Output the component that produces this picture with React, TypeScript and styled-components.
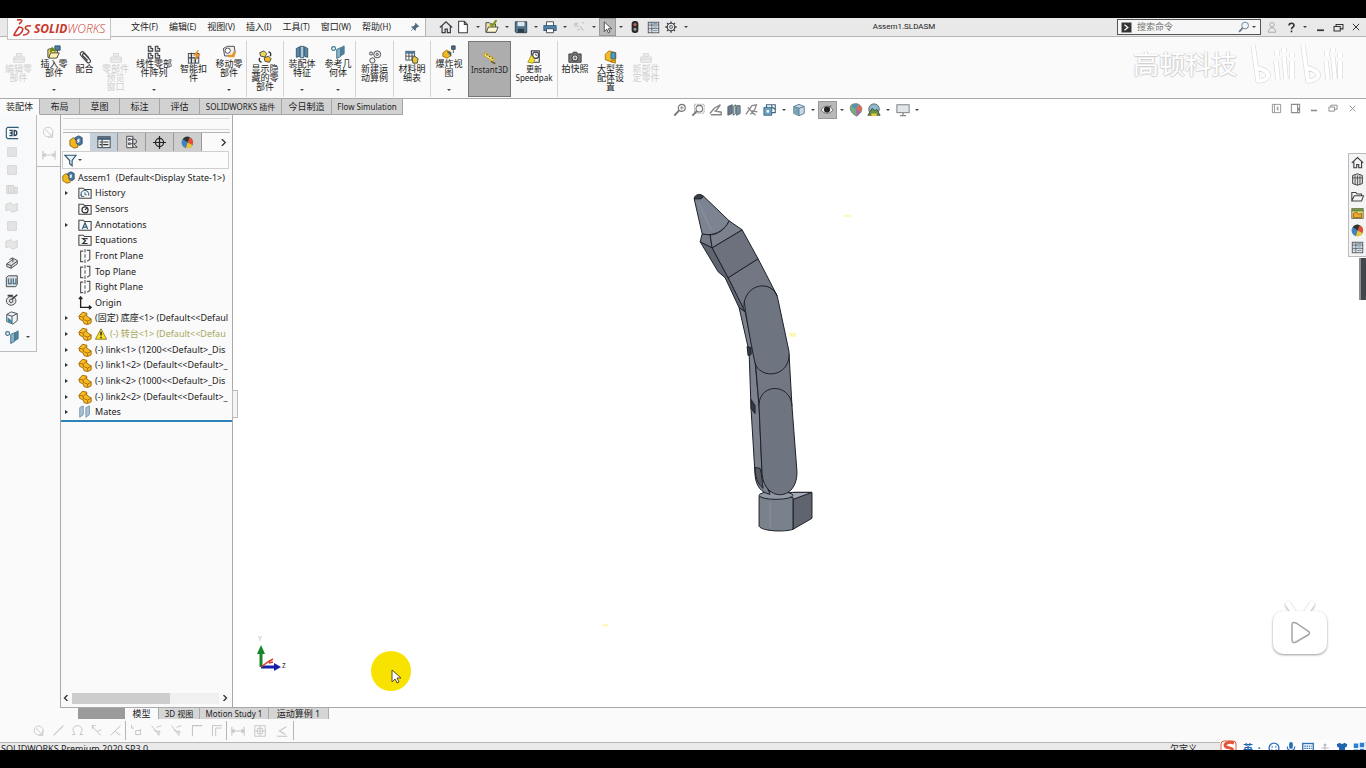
import React from "react";
import styled, { createGlobalStyle, css } from "styled-components";

const Global = createGlobalStyle`
  * { box-sizing: border-box; }
  body {
    margin: 0;
    background: #000;
    color: #222;
    font-family: "Noto Sans", "Noto Sans CJK SC", sans-serif;
    font-size: 9px;
    line-height: 12px;
  }
  button, input { font: inherit; color: inherit; }
  button { border: 0; padding: 0; margin: 0; background: none; }
  ul { list-style: none; margin: 0; padding: 0; }
`;

/* ---------- drawings ---------- */

const K = "#3c3f45";
const B = "#4a7fa5";
const Y = "#f0b91c";

const shapes: Record<string, React.ReactNode> = {
  home: <><path d="M1 8.500 8 2l7 6.500M3.500 7v7.500h3.500v-4h2.500v4H13V7" fill="none" stroke={K} strokeWidth="1.400" /></>,
  file: <path d="M3 1.500h6.500l3.500 3.500v9.500H3zM9.500 1.500V5H13" fill="#fff" stroke={K} strokeWidth="1.200" />,
  open: <><path d="M1 14V3h4l1.500 1.500H12V14z" fill="#efe0a0" stroke={K} /><path d="M1.500 14 4 8h11l-2.500 6z" fill="#fff7cf" stroke={K} /><path d="M13 0 8.500 7 6 4.500" fill="none" stroke="#7d9a1c" strokeWidth="2.500" /></>,
  save: <><path d="M1.500 2h13v12.500h-12l-1-1z" fill="#53788f" stroke="#2b3d4b" /><path d="M4 2h8v5H4z" fill="#dce7ee" /><path d="M4.500 10h7v4.500h-7z" fill="#2b3d4b" /></>,
  print: <><path d="M4 7V2h8v5" fill="#fff" stroke={K} /><rect x="1" y="6.500" width="14" height="5.500" fill="#4b86b4" stroke="#24506f" /><path d="M4 10h8v4.500H4z" fill="#fff" stroke={K} /></>,
  undo: <path d="M3 4l4 4M3 4v4M3 4h4M9 7l4 5M6 11h3M11 3h3" fill="none" stroke="#c8c8c8" strokeWidth="1.500" />,
  cursor: <path d="M4 1v12l3-3 2 4.500 2-1L9 9.500h4z" fill="#fff" stroke="#333" />,
  traffic: <><rect x="3.500" y="0" width="9" height="16" rx="4" fill="#2a2a2a" /><circle cx="8" cy="4.500" r="2" fill="#c9665c" /><circle cx="8" cy="11" r="2" fill="#9c9c9c" /></>,
  list: <><rect x="1.500" y="1.500" width="13" height="13" fill="#fff" stroke={K} /><path d="M1.500 5h13M1.500 9.500h13M6 1.500v13" stroke={K} /><path d="M3 3.300h1.500M3 7.300h1.500M3 12h1.500M7.500 3.300H13M7.500 7.300H13M7.500 12H13" stroke={B} strokeWidth="1.300" /></>,
  gear: <><circle cx="8" cy="8" r="5" fill="none" stroke={K} strokeWidth="1.500" /><circle cx="8" cy="8" r="2" fill="none" stroke={K} /><path d="M8 .5v2.500M8 13v2.500M.5 8H3M13 8h2.500M2.700 2.700l1.800 1.800M11.500 11.500l1.800 1.800M2.700 13.300l1.800-1.800M11.500 4.500l1.800-1.800" stroke={K} strokeWidth="1.800" /></>,
  pin: <path d="M9 2l5 5-2 .5-3 3-.5 3L2.500 8l3-.5 3-3zM5.500 10.500 2 14" fill="#4f6f86" stroke="#42576a" />,
  user: <><circle cx="8" cy="5" r="3" fill="none" stroke="#999" /><path d="M3 15c0-8 10-8 10 0z" fill="none" stroke="#999" /></>,
  help: <path d="M4.500 5c0-4.500 7-4 7 0 0 2.500-3.500 2.500-3.500 5.500M8 12.500v2.500" fill="none" stroke="#333" strokeWidth="2.400" />,
  min: <path d="M3 12h10" stroke="currentColor" strokeWidth="2.500" />,
  restore: <path d="M1.500 6.500h9V13h-9zM4.500 6.500v-3h10v6.500h-4" fill="none" stroke="currentColor" strokeWidth="1.500" />,
  close: <path d="M3 3l10 10M13 3 3 13" stroke="currentColor" strokeWidth="1.600" />,
  paneL: <path d="M2 2h12v12H2zM5 2v12M10 5v6M9 6v4" fill="none" stroke="currentColor" strokeWidth="1.300" />,
  paneR: <path d="M2 2h12v12H2zM11 2v12M12.500 7v4" fill="none" stroke="currentColor" strokeWidth="1.500" />,
  search: <><circle cx="9.500" cy="6" r="4.500" fill="#eef5fb" stroke="#69798c" strokeWidth="1.200" /><path d="M6 9.500 1.500 14.500" stroke="#69798c" strokeWidth="2.200" /></>,
  prompt: <><rect x="1" y="1" width="14" height="14" fill="#333" stroke="#888" /><path d="M5 4l5 4-5 4" fill="none" stroke="#fff" strokeWidth="1.800" /></>,
  insert: <><path d="M1 14V5l4-1 1 2h6v8z" fill="#f3dc6b" stroke={K} /><path d="M2 15l2-6h10l-3 6z" fill="#fff1ae" stroke={K} /><path d="M9 1h6v5H9z" fill={B} stroke="#2d4c63" /><path d="M4 8l2-4 4 3" fill="none" stroke="#6c8b1e" strokeWidth="2.500" /></>,
  clip: <path d="M12.500 9 7 3C4.500.5 1 3.500 3.500 6.500l7 7.500c2.500 2 5-.5 3-3L7.500 4.500C6 3.500 4.500 5 5.500 6.500L11 12" fill="none" stroke={K} strokeWidth="1.300" />,
  pattern: <g fill="#ddd" stroke={K} strokeWidth="1.200"><path d="M1.500 1.500h3V4h2v3h-5zM9.500 1.500h3V4h2v3h-5zM1.500 9.500h3V12h2v3h-5zM9.500 9.500h3V12h2v3h-5z" /></g>,
  smart: <><rect x="1.500" y="4" width="12" height="11" fill="#dceaf4" stroke={K} /><path d="M5 3v12M9.500 9v6M1.500 9h12" stroke={K} strokeWidth="1.500" /><path d="M13 0 7.500 6H11l-3 6 7-7h-4z" fill="#f29a2e" stroke="#d67b12" strokeWidth=".7" /></>,
  move: <><path d="M1.500 4 6 1.500h8l1 7-4 4H3z" fill="#eee" stroke={K} /><circle cx="6.500" cy="6.500" r="3" fill="#fff" stroke={K} /><path d="M7 12.500h6l1.500-5" stroke="#e79624" strokeWidth="3" fill="none" /></>,
  show: <><path d="M2 3l5-2 3 3-2 4-5-1z" fill="#f0d55c" stroke={K} /><path d="M7 9l5-2 3 3-2 4-5-1z" fill={Y} stroke={K} /><path d="M12 2c3 1 3 3 2 5M4 14C1 13 1 11 2 9" fill="none" stroke="#333" strokeWidth="1.600" /></>,
  feature: <><path d="M1.500 4l4-2v11l-4 1zM11 2l3.500 2v10l-3.500-1z" fill="#5b88a6" stroke="#31546c" /><path d="M6 1.500h4v13H6z" fill="#a9c5d8" stroke="#31546c" /></>,
  refgeo: <><circle cx="3" cy="4" r="2.200" fill="none" stroke="#3d718f" strokeWidth="1.300" /><path d="M6.500 5l4.500-2v10l-4.500 2.500z" fill="#8bb0c6" stroke="#3d718f" /><path d="M11.500 3 15 1v9l-3.500 2z" fill="#55829e" stroke="#3d718f" /></>,
  motion: <><circle cx="10.500" cy="5" r="4" fill="#eee" stroke={K} /><circle cx="10.500" cy="5" r="1.300" fill="none" stroke={K} /><circle cx="5" cy="12" r="3" fill="#eee" stroke={K} /><circle cx="3.500" cy="4" r="1.800" fill="#ddd" stroke={K} /></>,
  bom: <><rect x="1" y="1.500" width="10" height="10" fill="#fff" stroke={K} /><path d="M1 3h10" stroke={B} strokeWidth="2.500" /><path d="M1 7h10M4.500 3v8M8 3v8" stroke={K} /><path d="M8 9l3-2 4 3-1 5H9z" fill="#e8c534" stroke={K} /></>,
  explode: <><path d="M1 9l4-3 5 2v4l-4 3-5-2z" fill={Y} stroke="#a86b10" /><path d="M6 8l4 1v4" fill={B} stroke="#2c4464" /><path d="M11 1h4v4h-4z" fill="#4d6e96" stroke={K} /><path d="M13 6v3" stroke={K} /></>,
  instant: <><path d="M2 2l11 7-2 3L1 5z" fill="#f7eaa0" stroke="#cfa91b" strokeWidth="1.200" /><path d="M4 4l1 1M7 6l1 1M10 8l1 1M9 12l5 2.500" stroke="#59511f" strokeWidth="1.500" /></>,
  speedpak: <><path d="M5 1h9v13H5z" fill="#f5f5f5" stroke={K} strokeWidth="1.300" /><circle cx="10" cy="6" r="3.500" fill="#fff" stroke={K} strokeWidth="1.400" /><path d="M10 4v2h2" fill="none" stroke={K} /><path d="M1 14 5 6l4 5-2 4z" fill="#f1df36" stroke="#a69722" /></>,
  camera: <><path d="M1 4.500h4l1-2h4l1 2h4V14H1z" fill="#77797d" stroke="#333" /><circle cx="8" cy="9" r="3.500" fill="#ddd" stroke="#222" /><circle cx="8" cy="9" r="1.500" fill="#777" /></>,
  large: <><path d="M1.500 5l4-4 8 2v7l-4 4-8-3z" fill="#f5bd25" stroke="#a86b10" /><path d="M8 3h5v7H8z" fill="#4e9cc4" stroke="#286787" /><path d="M7 13l6 2v-4z" fill={Y} stroke="#a86b10" /></>,
  ghost: <g stroke="#d6d6d6" fill="#eee"><path d="M2 8h12v6H2zM5 4h6v3H5z" /><path d="M1 10.500h14" /></g>,
  asm: <><path d="M1 6l4-3 3 2v4l2 2v3l-4 1-5-3z" fill={Y} stroke="#8b640e" /><path d="M7 3l4-2 4 2v7l-3 2-3-2V6L7 5z" fill="#4b79a5" stroke="#2c4464" /><path d="M9.500 5 12 4v4l-2.500 1z" fill="#e9f2fa" /></>,
  part: <><path d="M1 6l4-4.500 5 1v3.500l5 3v4.500l-4 2-4-1-1-3-4-2z" fill="#f9bb22" stroke="#a2690c" strokeWidth="1.100" /><path d="M1.500 6 6 7l4-3.500M6 7v3.500M7 10l4 1.500 4-2M11 11.500v3.500" fill="none" stroke="#a2690c" /></>,
  props: <><rect x="1" y="2" width="14" height="12.500" fill="#eef3f7" stroke="#333" /><path d="M1 4h14" stroke="#40607a" strokeWidth="3" /><path d="M3 8h2M3 11h2M7 8h6M7 11h6M5.800 5v9" stroke="#333" strokeWidth="1.200" /></>,
  config: <><path d="M2 1.500h7v13H2z" fill="#f3f3f3" stroke={K} /><path d="M4 4h2v2H4zM4 9h2v2H4zM6 5h3v5H6" fill="none" stroke={K} /><path d="M9 4l4 2v3l-3 1 4 4H9z" fill="#ddd" stroke={K} /></>,
  target: <><circle cx="8" cy="8" r="5" fill="none" stroke="#222" strokeWidth="1.500" /><path d="M8 0v16M0 8h16" stroke="#222" strokeWidth="1.500" /></>,
  ball: <><circle cx="8" cy="8" r="7" fill="#3d9b62" /><path d="M8 8 2 4a7 7 0 0 1 9-2.500z" fill="#333" /><path d="M8 8l3-6.500A7 7 0 0 1 14 11z" fill="#e84c35" /><path d="M8 8l6 3a7 7 0 0 1-8 3.700z" fill="#f2c530" /><path d="M8 8 6 14.700A7 7 0 0 1 2 4z" fill="#3f83c4" /></>,
  swatch: <><path d="M2 3c3-3 8-3 11 0 3 4 2 7-4 12C4 13 0 8 2 3z" fill="#6db07e" stroke="#777" /><path d="M8 7 3 3c2-2 5-2 7-1z" fill="#4f90c0" /><path d="M8 7l3-5c4 2 4 5 2 8z" fill="#e26a54" /><path d="M8 7l5 3-4 5z" fill="#b65bb0" /></>,
  filter: <path d="M1 1.500h14L10 8v6.500L7 12V8z" fill="#eaf2f8" stroke="#2f5673" strokeWidth="1.400" />,
  history: <><path d="M1 14V2.500h5L7.500 4H15v10z" fill="#f8f8f8" stroke="#444" strokeWidth="1.200" /><path d="M4 12a4.500 4.500 0 1 1 8-1M4 12V9M4 12h3M8 7v3h2" fill="none" stroke="#4e7389" strokeWidth="1.200" /></>,
  sensors: <><path d="M1 14V2.500h5L7.500 4H15v10z" fill="#f8f8f8" stroke="#444" strokeWidth="1.200" /><circle cx="8" cy="9" r="3.500" fill="none" stroke="#333" strokeWidth="1.400" /><path d="M8 9l2-2" stroke="#333" strokeWidth="1.500" /></>,
  annot: <><path d="M1 14V2.500h5L7.500 4H15v10z" fill="#f8f8f8" stroke="#444" strokeWidth="1.200" /><path d="M5 12.500 8 5.500l3 7M6 10.500h4" fill="none" stroke="#315c79" strokeWidth="1.400" /></>,
  equa: <><path d="M1 14V2.500h5L7.500 4H15v10z" fill="#f8f8f8" stroke="#444" strokeWidth="1.200" /><path d="M11 6.500H5.500L8.500 9l-3 3H11" fill="none" stroke="#333" strokeWidth="1.400" /></>,
  plane: <><path d="M6 2.500H3v12h3M10 1.500h3.500v10.500L10.500 14" fill="none" stroke="#555" strokeWidth="1.300" /><path d="M8 0v16" stroke="#555" strokeWidth="1.200" strokeDasharray="4 2" /></>,
  origin: <path d="M3 1v12h12M1 3.500 3 1l2 2.500M12.500 11l2.500 2-2.500 2" fill="none" stroke="#222" strokeWidth="1.500" />,
  warn: <><path d="M8 1 15.500 15H.5z" fill="#f7df23" stroke="#75690e" /><path d="M8 5v5M8 11.500v2" stroke="#111" strokeWidth="1.800" /></>,
  mates: <path d="M2 3l4-2v10l-4 3zM9 3l4-2v10l-4 3z" fill="#a9c3d6" stroke="#6f90a8" />,
  threeD: <><path d="M15 2.500V1.500H3L1.500 3v10L3 14.500h12" fill="none" stroke="#315c79" strokeWidth="1.300" /><path d="M5 5h3v6H5M5.500 8H8M10.500 5v6c4 0 4-6 0-6z" fill="none" stroke="#25435a" strokeWidth="1.500" /></>,
  block: <path d="M3 3h10v10H3z" fill="#e3e3e3" stroke="#d2d2d2" />,
  blockB: <><path d="M2 4h8v9H2zM11 6h3v7h-3z" fill="#e6e6e6" stroke="#cfcfcf" /><path d="M4 4v9M7 4v9" stroke="#cfcfcf" /></>,
  blockC: <path d="M1 5l6-2 2 3 5-2v8l-6 2-3-3-4 1z" fill="#e6e6e6" stroke="#d0d0d0" />,
  extr: <><path d="M2 9l8-6 4 2v4l-7 5-5-2z" fill="#dedede" stroke={K} /><path d="M2 9l5 2 7-5M7 11v3M5 4l4-2v5" fill="none" stroke={K} /></>,
  shell: <><path d="M1.500 4 4 2h10v10l-2 2.500H1.500z" fill="#d8dee3" stroke={K} /><path d="M4 5v6h3V5M9.500 5v6h3V5" fill="none" stroke="#4d7187" strokeWidth="1.500" /></>,
  disk: <><ellipse cx="7" cy="9" rx="5.500" ry="5" fill="#e5e5e5" stroke={K} /><circle cx="7" cy="9" r="2" fill="none" stroke={K} /><path d="M8 7l6-5M3 3h6" stroke={K} strokeWidth="1.800" /></>,
  cube: <><path d="M2 4l5-3 7 2v8l-5 4-7-3z" fill="#eef5f9" stroke={K} /><path d="M2 4l6 2 6-3M8 6v8" fill="none" stroke={K} /><path d="M3 7l5 4v3l-5-2z" fill="#3c88a8" /></>,
  zoomfit: <><circle cx="10" cy="5.500" r="4" fill="#f4f4f4" stroke="#777" strokeWidth="1.300" /><path d="M7 8.500 1.500 14.500" stroke="#777" strokeWidth="2.200" /><path d="M8 5.500h4M10 3.500v4" stroke="#888" /></>,
  zoomarea: <><path d="M4 1.500h11v10H4z" fill="none" stroke="#999" strokeDasharray="2 1" /><circle cx="9.500" cy="6.500" r="3.800" fill="#f4f4f4" stroke="#777" strokeWidth="1.200" /><path d="M6.500 9.500 1.500 14.500" stroke="#777" strokeWidth="2.200" /></>,
  prev: <path d="M1 12l5-6 7-4-5 7M2 13.500h12v-3L6 9" fill="none" stroke="#888" strokeWidth="1.600" />,
  section: <><path d="M1 4l5-2v10l-5 2z" fill="#67798a" stroke="#566" /><path d="M7 4l3-2v10l-3 2z" fill="#b9c9d4" stroke="#566" /><path d="M11 3h4v9l-4 2z" fill="#7e95a6" stroke="#566" /></>,
  dyn: <path d="M1 13 8 3l5-1-2 6-5 5M3 5l9 9M8 9l6 1" fill="none" stroke="#888" strokeWidth="1.500" />,
  view: <><path d="M1 5h9v9H1z" fill="#6c9fbd" stroke="#3d657e" /><path d="M4 5V2h10v9h-4M10 2v3l4 2" fill="none" stroke="#3d657e" strokeWidth="1.300" /><path d="M4 8h3v3H4z" fill="#e9f3f8" /></>,
  style: <><path d="M2 4l6-2.500L14 4v8l-6 2.500L2 12z" fill="#c6dae6" stroke="#54778c" /><path d="M2 4l6 2v8.500L2 12z" fill="#7ba4ba" /><path d="M2 4l6 2 6-2M8 6v8" fill="none" stroke="#54778c" /></>,
  eye: <><path d="M1 8c4-6 10-6 14 0-4 5-10 5-14 0z" fill="#eee" stroke="#666" /><circle cx="8" cy="7.500" r="3.500" fill="#222" /><path d="M10 5l3-2" stroke="#444" /></>,
  scene: <><circle cx="8" cy="7" r="6" fill="#8bbbd1" stroke="#555" /><path d="M1 14 6 6l3 3 2-2 4 7z" fill="#6a9440" stroke="#444" /><path d="M5 12h6v3H5z" fill="#e3cd3c" /></>,
  monitor: <><rect x="1" y="2" width="14" height="9" fill="#e1e6ea" stroke="#888" strokeWidth="1.200" /><path d="M8 11v3M4.500 14.500h7" stroke="#888" strokeWidth="1.500" /></>,
  lib: <><path d="M2 3l6-2 6 2v10l-6 2-6-2z" fill="#ddd" stroke="#444" strokeWidth="1.200" /><path d="M2 6h12M8 3v12M5 3v11M11 3v11" stroke="#444" /></>,
  folder: <path d="M1 13.500V3h5l1.500 2H13v2M1 13.500 4 7h11.500L13 13.500z" fill="#f5f5f5" stroke="#444" strokeWidth="1.300" />,
  palette: <><rect x="1" y="2" width="14" height="12" fill="#e9d269" stroke="#6a6240" /><path d="M1 4h14" stroke="#568b45" strokeWidth="2.500" /><path d="M3 8l4-2 2 3 4-1v5H3z" fill="#f5a52c" stroke="#7b6427" /></>,
  sk1: <><circle cx="7" cy="8" r="5.500" fill="none" stroke="currentColor" /><path d="M4 5l8 9M12 8v6H7" fill="none" stroke="currentColor" /></>,
  line: <path d="M2 14 14 2" stroke="currentColor" strokeWidth="1.300" />,
  arc: <path d="M1 13h4C-1 5 5 2 8 2s9 3 3 11h4" fill="none" stroke="currentColor" strokeWidth="1.200" />,
  trim: <path d="M2 2l11 12M3 2v4M3 2h4M9 9l5-2" fill="none" stroke="currentColor" strokeWidth="1.200" />,
  cross: <path d="M2 14 14 2M7 9l7 5" fill="none" stroke="currentColor" strokeWidth="1.200" />,
  hook: <path d="M2 1v4h3M7 8h6v5H7zM13 8V6" fill="none" stroke="currentColor" strokeWidth="1.200" />,
  off: <path d="M2 2l9 12V8M5 8l8 2M8 4l6-2" fill="none" stroke="currentColor" strokeWidth="1.200" />,
  corner: <path d="M3 15V2h12" fill="none" stroke="currentColor" strokeWidth="1.300" />,
  cornerB: <path d="M3 15V2h12M7 15V5h7" fill="none" stroke="currentColor" strokeWidth="1.200" />,
  dim: <path d="M1 3v10M15 3v10M1 8h14M4 6 1.500 8 4 10M12 6l2.500 2L12 10" fill="none" stroke="currentColor" strokeWidth="1.300" />,
  grid: <path d="M2 2h12v12H2zM2 8h12M8 2v12M5 5h6v6H5z" fill="none" stroke="currentColor" />,
  angle: <path d="M13 3 5 8l7 4M2 14h12" fill="none" stroke="currentColor" strokeWidth="1.300" />,
  smile: <><circle cx="8" cy="8" r="6.500" fill="#fff" stroke="#2d6fb7" strokeWidth="1.800" /><path d="M5.500 5v3M10.500 5v3M4.500 9.500c2 3 5 3 7 0" stroke="#2d6fb7" fill="none" strokeWidth="1.200" /></>,
  mic: <><rect x="5.500" y="0" width="5" height="9" rx="2.500" fill="#2d6fb7" /><path d="M3 6c0 7 10 7 10 0M8 11v4" fill="none" stroke="#2d6fb7" strokeWidth="1.500" /></>,
  kbd: <><rect x="1" y="2" width="14" height="11" fill="#fff" stroke="#2d6fb7" strokeWidth="1.800" /><path d="M3 5.500h10M3 8.500h10" stroke="#2d6fb7" strokeDasharray="2 1" strokeWidth="1.500" /></>,
  shirt: <path d="M1 3l4-2c1 2 5 2 6 0l4 2-1 4h-2v8H4V7H2z" fill="#1f64b0" />,
  apps: <path d="M1 2h6v6H1zM9 1h6v6H9zM1 10h6v5H1zM9 9h6v6H9z" fill="#2d7fd0" />,
  person: <><circle cx="8" cy="4" r="2" fill="#bbb" /><path d="M3 8h10M8 6v6M4 14h8" stroke="#bbb" strokeWidth="1.500" /></>,
};

const Glyph = styled.svg<{ $s: number }>`
  width: ${(p) => p.$s}px;
  height: ${(p) => p.$s}px;
  flex: none;
  display: block;
`;
const Icon = ({ n, s = 14 }: { n: string; s?: number }) => (
  <Glyph $s={s} viewBox="0 0 16 16" aria-hidden="true">{shapes[n]}</Glyph>
);

/* ---------- frame ---------- */

const Screen = styled.div`
  height: 100vh;
  padding: 18px 0;
  display: flex;
  flex-direction: column;
  background: #000;
`;
const Frame = styled.div`
  flex: 1;
  min-height: 0;
  display: flex;
  flex-direction: column;
  background: #fafafa;
  overflow: hidden;
  position: relative;
`;
const Spacer = styled.div<{ $g?: number }>`
  flex: ${(p) => p.$g ?? 1} 1 0;
`;

/* ---------- title bar ---------- */

const TitleBar = styled.header`
  height: 19px;
  flex: none;
  display: flex;
  align-items: center;
  background: #e9e9e9;
  border-bottom: 1px solid #b5b5b5;
`;
const LogoBox = styled.div`
  align-self: flex-start;
  flex: none;
  width: 104px;
  height: 22px;
  margin-left: 7px;
  display: flex;
  align-items: center;
  gap: 2px;
  padding: 0 4px;
  background: #fcfcfc;
  border: 1px solid #c4c4c4;
  border-top: 0;
  z-index: 2;
  color: #c8382c;
  font: 300 12px/22px "Open Sans", sans-serif;
  font-style: italic;
  b { font-weight: 700; }
`;
const MenuBar = styled.nav`
  align-self: stretch;
  width: 315px;
  flex: none;
  display: flex;
  align-items: center;
  gap: 11px;
  padding-left: 20px;
  background: #f9f9f9;
  border-right: 1px solid #b5b5b5;
  button { white-space: nowrap; }
  small { font-size: 8px; }
  svg { margin-left: 8px; }
`;
const QuickBar = styled.div`
  display: flex;
  align-items: center;
  padding-left: 12px;
`;
const IconButton = styled.button<{ $w?: number; $on?: boolean }>`
  width: ${(p) => p.$w ?? 18}px;
  height: 18px;
  flex: none;
  display: flex;
  align-items: center;
  justify-content: center;
  ${(p) => p.$on && css`background: #b9b9b9; border: 1px solid #999;`}
`;
const Caret = styled.i<{ $w?: number }>`
  width: ${(p) => p.$w ?? 11}px;
  flex: none;
  display: flex;
  justify-content: center;
  &::after {
    content: "";
    border: 2px solid transparent;
    border-top-color: #444;
    border-bottom: 0;
  }
`;
const DocTitle = styled.h1`
  margin: 0;
  font-family: Roboto, sans-serif;
  font-size: 8px;
  font-weight: 400;
`;
const SearchBox = styled.label`
  width: 144px;
  height: 16px;
  flex: none;
  display: flex;
  align-items: center;
  padding: 0 2px 0 3px;
  border: 1px solid #555;
  background: #f6f6f6;
  input {
    flex: 1;
    min-width: 0;
    border: 0;
    padding: 0 5px;
    background: none;
    outline: 0;
  }
  input::placeholder { color: #777; opacity: 1; }
`;
const WindowButtons = styled.div<{ $pale?: boolean }>`
  display: flex;
  align-items: center;
  gap: ${(p) => (p.$pale ? 1 : 0)}px;
  padding-right: ${(p) => (p.$pale ? 5 : 1)}px;
  color: ${(p) => (p.$pale ? "#8d8d8d" : "#333")};
`;

/* ---------- ribbon ---------- */

const Ribbon = styled.div`
  height: 62px;
  flex: none;
  display: flex;
  align-items: stretch;
  padding: 4px 0 1px;
  background: #fafafa;
  border-bottom: 1px solid #a9a9a9;
  position: relative;
`;
const Tool = styled.button<{ $w: number; $top?: boolean; $sep?: boolean; $on?: boolean; $off?: boolean; $small?: boolean }>`
  width: ${(p) => p.$w}px;
  flex: none;
  display: flex;
  flex-direction: column;
  align-items: center;
  padding-top: ${(p) => (p.$top ? 4 : 9)}px;
  white-space: pre;
  font-size: ${(p) => (p.$small ? 8 : 9)}px;
  line-height: 9px;
  border-right: 1px solid ${(p) => (p.$sep ? "#d4d4d4" : "transparent")};
  ${(p) => p.$on && css`background: #adadad; border: 1px solid #777;`}
  ${(p) => p.$off && css`color: #cfcfcf;`}
`;
const ToolCaret = styled(Caret)`
  margin-top: auto;
  margin-bottom: 6px;
`;
const Channel = styled.div`
  position: absolute;
  right: 23px;
  top: 5px;
  display: flex;
  align-items: center;
  gap: 12px;
  color: #fff;
  font-size: 26px;
  line-height: 44px;
  text-shadow: 1px 0 1px #ccc, 0 1px 1px #ccc, -1px 0 1px #ddd;
`;

/* ---------- tab strip and view toolbar ---------- */

const Strip = styled.div`
  height: 16px;
  flex: none;
  display: flex;
  align-items: flex-start;
  background: #fff;
  z-index: 1;
`;
const Tabs = styled.div`
  display: flex;
  height: 16px;
`;
const Tab = styled.button<{ $w: number; $on?: boolean; $small?: boolean }>`
  width: ${(p) => p.$w}px;
  white-space: nowrap;
  font-size: ${(p) => (p.$small ? 8 : 9)}px;
  line-height: 14px;
  background: ${(p) => (p.$on ? "#fafafa" : "#d2d2d2")};
  border-right: 1px solid #a5a5a5;
  border-bottom: 1px solid ${(p) => (p.$on ? "#fafafa" : "#a5a5a5")};
`;
const ViewBar = styled.div`
  display: flex;
  align-items: center;
  height: 22px;
  flex: none;
`;

/* ---------- work area ---------- */

const Work = styled.div`
  flex: 1;
  min-height: 0;
  display: flex;
  align-items: stretch;
`;
const SideTools = styled.div`
  width: 37px;
  height: 237px;
  flex: none;
  display: flex;
  flex-direction: column;
  padding: 9px 0 5px 3px;
  border: solid #bcbcbc;
  border-width: 0 1px 1px 0;
  background: #f7f9fa;
`;
const SideRow = styled.div`
  display: flex;
  align-items: center;
  flex: 1;
`;
const FloatTools = styled.div`
  width: 23px;
  height: 52px;
  flex: none;
  display: flex;
  flex-direction: column;
  align-items: center;
  gap: 9px;
  padding-top: 10px;
  border-bottom: 1px solid #bcbcbc;
  color: #c9c9c9;
`;
const Panel = styled.aside`
  width: 173px;
  flex: none;
  display: flex;
  flex-direction: column;
  border: solid #a9a9a9;
  border-width: 0 1px 1px 1px;
  position: relative;
`;
const Grip = styled.div`
  height: 18px;
  flex: none;
  margin: 0 2px;
  border-bottom: 1px solid #b5b5b5;
  display: flex;
  justify-content: center;
  &::before { content: ""; width: 100%; height: 10px; border: solid #d8d8d8; border-width: 1px 0; margin-top: 3px; }
`;
const PanelTabs = styled.div`
  height: 18px;
  flex: none;
  display: flex;
  padding-left: 1px;
  align-items: stretch;
`;
const PanelTab = styled.button<{ $bg: string }>`
  width: 28px;
  display: flex;
  align-items: center;
  justify-content: center;
  background: ${(p) => p.$bg};
  border-right: 1px solid ${(p) => (p.$bg === "none" ? "transparent" : "#999")};
`;
const More = styled.button`
  margin-left: auto;
  padding-right: 5px;
`;
const FilterBar = styled.div`
  height: 18px;
  flex: none;
  margin: 0 3px 0 1px;
  padding-left: 1px;
  display: flex;
  align-items: center;
  border: 1px solid #cfcfcf;
  background: #fcfcfc;
`;
const Tree = styled.ul`
  height: 252px;
  flex: none;
  display: flex;
  flex-direction: column;
  margin-top: 1px;
  border-bottom: 2px solid #2b83b8;
`;
const Node = styled.li<{ $root?: boolean; $warn?: boolean }>`
  flex: 1;
  display: flex;
  align-items: center;
  white-space: pre;
  gap: 3px;
  padding-left: ${(p) => (p.$root ? 1 : 2)}px;
  color: ${(p) => (p.$warn ? "#a9a95e" : "#222")};
`;
const Twist = styled.i<{ $show?: boolean }>`
  width: 12px;
  flex: none;
  &::after {
    content: "";
    display: block;
    width: 0;
    margin-left: 2px;
    border: 2px solid transparent;
    border-left: 3px solid ${(p) => (p.$show ? "#333" : "transparent")};
    border-right: 0;
  }
`;
const ScrollRow = styled.div`
  margin-top: auto;
  height: 18px;
  flex: none;
  display: flex;
  align-items: center;
  gap: 3px;
  padding: 0 4px 0 2px;
`;
const Track = styled.div`
  flex: 1;
  height: 11px;
  background: #f0f0f0;
  &::before { content: ""; display: block; width: 67%; height: 100%; background: #cdcdcd; }
`;
const PanelHandle = styled.div`
  position: absolute;
  right: -6px;
  top: 275px;
  width: 6px;
  height: 28px;
  background: #f4f4f4;
  border: 1px solid #bbb;
  z-index: 1;
`;
const Canvas = styled.main`
  flex: 1;
  min-width: 0;
  background: #fff;
  position: relative;
  border-bottom: 1px solid #a9a9a9;
`;
const Model = styled.svg`
  display: block;
  width: 100%;
  height: 100%;
`;
const Triad = styled.svg`
  position: absolute;
  left: 18px;
  bottom: 28px;
  width: 44px;
  height: 44px;
`;
const Pointer = styled.svg`
  position: absolute;
  left: 136px;
  bottom: 14px;
  width: 44px;
  height: 44px;
`;
const TaskPane = styled.div`
  position: absolute;
  right: 0;
  top: 38px;
  width: 18px;
  height: 104px;
  display: flex;
  flex-direction: column;
  justify-content: space-around;
  align-items: center;
  background: #f4f4f4;
  border: 1px solid #bbb;
  border-right: 0;
`;
const PaneHandle = styled.div`
  position: absolute;
  right: 0;
  top: 143px;
  width: 7px;
  height: 42px;
  background: #43474c;
  border-left: 2px solid #8b8f94;
`;
const PlayBadge = styled.svg`
  position: absolute;
  right: 34px;
  bottom: 46px;
  width: 64px;
  height: 62px;
  filter: drop-shadow(0 1px 1px #999);
`;

/* ---------- bottom ---------- */

const ModelTabs = styled.div`
  height: 11px;
  flex: none;
  display: flex;
  padding-left: 78px;
`;
const TabFiller = styled.div`
  width: 47px;
  background: #9b9b9b;
`;
const ModelTab = styled.button<{ $w: number; $on?: boolean; $small?: boolean }>`
  width: ${(p) => p.$w}px;
  height: 11px;
  font-size: ${(p) => (p.$small ? 8 : 9)}px;
  line-height: 10px;
  white-space: nowrap;
  background: ${(p) => (p.$on ? "#fafafa" : "#d5d5d5")};
  border-right: 1px solid #aaa;
`;
const SketchBar = styled.div`
  height: 24px;
  flex: none;
  display: flex;
  align-items: center;
  padding-left: 11px;
  color: #c4c4c4;
  border-bottom: 1px solid #b5b5b5;
`;
const Rule = styled.div`
  width: 1px;
  height: 19px;
  background: #b5b5b5;
`;
const StatusBar = styled.footer`
  height: 7px;
  flex: none;
  display: flex;
  justify-content: space-between;
  padding: 0 169px 0 1px;
  line-height: 12px;
  background: #e9e9e9;
  overflow: hidden;
`;
const Ime = styled.div`
  position: absolute;
  right: 1px;
  bottom: -5px;
  height: 15px;
  width: 145px;
  display: flex;
  align-items: center;
  justify-content: space-between;
  background: #fdfdfd;
  color: #1f64b0;
  b { font-size: 10px; }
`;

type ToolDef = { n: string; t: string; w: number; top?: boolean; sep?: boolean; on?: boolean; off?: boolean; small?: boolean };
const tools: ToolDef[] = [
  { n: "ghost", t: "编辑零\n部件", w: 38, off: true },
  { n: "insert", t: "插入零\n部件", w: 33, top: true },
  { n: "clip", t: "配合", w: 28 },
  { n: "ghost", t: "零部件\n预览\n窗口", w: 34, off: true },
  { n: "pattern", t: "线性零部\n件阵列", w: 43, top: true },
  { n: "smart", t: "智能扣\n件", w: 36 },
  { n: "move", t: "移动零\n部件", w: 35, top: true, sep: true },
  { n: "show", t: "显示隐\n藏的零\n部件", w: 37, sep: true },
  { n: "feature", t: "装配体\n特征", w: 37, top: true },
  { n: "refgeo", t: "参考几\n何体", w: 35, top: true, sep: true },
  { n: "motion", t: "新建运\n动算例", w: 38, sep: true },
  { n: "bom", t: "材料明\n细表", w: 37, sep: true },
  { n: "explode", t: "爆炸视\n图", w: 37, top: true },
  { n: "instant", t: "Instant3D", w: 43, on: true, small: true },
  { n: "speedpak", t: "更新\nSpeedpak", w: 47, sep: true, small: true },
  { n: "camera", t: "拍快照", w: 35 },
  { n: "large", t: "大型装\n配体设\n置", w: 36 },
  { n: "ghost", t: "新部件\n定零件", w: 35, off: true },
];

const nodes: { n: string; t: string; x?: boolean; warn?: boolean }[] = [
  { n: "history", t: "History", x: true },
  { n: "sensors", t: "Sensors" },
  { n: "annot", t: "Annotations", x: true },
  { n: "equa", t: "Equations" },
  { n: "plane", t: "Front Plane" },
  { n: "plane", t: "Top Plane" },
  { n: "plane", t: "Right Plane" },
  { n: "origin", t: "Origin" },
  { n: "part", t: "(固定) 底座<1> (Default<<Defaul", x: true },
  { n: "part", t: "(-) 转台<1> (Default<<Defau", x: true, warn: true },
  { n: "part", t: "(-) link<1> (1200<<Default>_Dis", x: true },
  { n: "part", t: "(-) link1<2> (Default<<Default>_", x: true },
  { n: "part", t: "(-) link<2> (1000<<Default>_Dis", x: true },
  { n: "part", t: "(-) link2<2> (Default<<Default>_", x: true },
  { n: "mates", t: "Mates", x: true },
];

const menus = [["文件", "F"], ["编辑", "E"], ["视图", "V"], ["插入", "I"], ["工具", "T"], ["窗口", "W"], ["帮助", "H"]];
const quick = ["file", "open", "save", "print", "undo"];
const ribbonTabs: [string, number, boolean?][] = [["装配体", 40], ["布局", 40], ["草图", 40], ["标注", 40], ["评估", 40], ["SOLIDWORKS 插件", 82, true], ["今日制造", 50], ["Flow Simulation", 71, true]];
const sideIcons = ["threeD", "block", "block", "blockB", "blockC", "block", "blockC", "extr", "shell", "disk", "cube", "refgeo"];

export default function App() {
  return (
    <Screen>
      <Global />
      <Frame>
        <TitleBar>
          <LogoBox>
            <svg width="20" height="20" viewBox="0 0 20 18" fill="none" stroke="#c8382c" strokeWidth="1.600">
              <path d="M5 0c6-1 6 1 2 4M6 7c6 0 6 3 2 7-1 1-4 2-6 1 1-3 3-5 5-8M19 6c-4-1-7 1-5 3 2 1 4 2 2 4-1 2-4 2-5 2" />
            </svg>
            <span><b>SOLID</b>WORKS</span>
          </LogoBox>
          <MenuBar>
            {menus.map(([t, k]) => <button key={k}>{t}<small>({k})</small></button>)}
            <Icon n="pin" s={10} />
          </MenuBar>
          <QuickBar>
            <IconButton aria-label="Home" $w={16}><Icon n="home" /></IconButton>
            {quick.map((n) => (
              <React.Fragment key={n}>
                <IconButton aria-label={n}><Icon n={n} /></IconButton>
                <Caret $w={11} />
              </React.Fragment>
            ))}
            <IconButton $on $w={17} aria-label="Select"><Icon n="cursor" s={13} /></IconButton>
            <Caret $w={10} />
            <IconButton aria-label="Rebuild"><Icon n="traffic" s={12} /></IconButton>
            <IconButton aria-label="Properties"><Icon n="list" s={13} /></IconButton>
            <IconButton aria-label="Options"><Icon n="gear" s={12} /></IconButton>
            <Caret />
          </QuickBar>
          <Spacer />
          <DocTitle>Assem1.SLDASM</DocTitle>
          <Spacer />
          <SearchBox>
            <Icon n="prompt" s={11} />
            <input type="text" placeholder="搜索命令" aria-label="搜索命令" />
            <Icon n="search" s={12} />
            <Caret $w={8} />
          </SearchBox>
          <WindowButtons>
            <IconButton $w={22} aria-label="User"><Icon n="user" s={12} /></IconButton>
            <IconButton $w={16} aria-label="Help"><Icon n="help" s={11} /></IconButton>
            <Caret $w={12} />
            <IconButton aria-label="Minimize"><Icon n="min" s={11} /></IconButton>
            <IconButton aria-label="Restore"><Icon n="restore" s={11} /></IconButton>
            <IconButton aria-label="Close"><Icon n="close" s={10} /></IconButton>
          </WindowButtons>
        </TitleBar>

        <Ribbon>
          {tools.map((d, i) => (
            <Tool key={i} $w={d.w} $top={d.top} $sep={d.sep} $on={d.on} $off={d.off} $small={d.small} disabled={d.off}>
              <Icon n={d.n} />
              <span>{d.t}</span>
              {d.top && <ToolCaret />}
            </Tool>
          ))}
          <Channel>
            <span>高顿科技</span>
            <svg width="94" height="44" viewBox="0 0 94 44" fill="none">
              <g stroke="#d2d2d2" strokeWidth="5" strokeLinejoin="round">
                <path d="M4 3l5 36c11 0 16-9 0-13M54 3l5 36c11 0 16-9 0-13M27 19l2 19M35 15l2 22M43 19v18M77 19l2 19M84 15l2 22M91 19v18M28 9v5M35 6v4M43 11v4M78 9v5M84 6v4M91 11v4" />
              </g>
              <g stroke="#fff" strokeWidth="4" strokeLinejoin="round">
                <path d="M4 3l5 36c11 0 16-9 0-13M54 3l5 36c11 0 16-9 0-13M27 19l2 19M35 15l2 22M43 19v18M77 19l2 19M84 15l2 22M91 19v18M28 9v5M35 6v4M43 11v4M78 9v5M84 6v4M91 11v4" />
              </g>
            </svg>
          </Channel>
        </Ribbon>

        <Strip>
          <Tabs>
            {ribbonTabs.map(([t, w, small], i) => <Tab key={t} $w={w} $on={i === 0} $small={small}>{t}</Tab>)}
          </Tabs>
          <Spacer $g={7} />
          <ViewBar>
            {["zoomfit", "zoomarea", "prev", "section", "dyn", "view"].map((n) => (
              <IconButton key={n} aria-label={n}><Icon n={n} /></IconButton>
            ))}
            <Caret />
            <IconButton aria-label="style"><Icon n="style" /></IconButton>
            <Caret $w={10} />
            <IconButton $on $w={19} aria-label="Hide or show"><Icon n="eye" /></IconButton>
            <Caret $w={10} />
            <IconButton aria-label="Appearance"><Icon n="swatch" /></IconButton>
            <IconButton aria-label="Scene"><Icon n="scene" /></IconButton>
            <Caret />
            <IconButton aria-label="View settings"><Icon n="monitor" /></IconButton>
            <Caret />
          </ViewBar>
          <Spacer $g={9} />
          <WindowButtons $pale>
            <IconButton aria-label="Pane left"><Icon n="paneL" s={11} /></IconButton>
            <IconButton aria-label="Pane right"><Icon n="paneR" s={11} /></IconButton>
            <IconButton aria-label="Minimize document"><Icon n="min" s={10} /></IconButton>
            <IconButton aria-label="Restore document"><Icon n="restore" s={10} /></IconButton>
            <IconButton aria-label="Close document"><Icon n="close" s={9} /></IconButton>
          </WindowButtons>
        </Strip>

        <Work>
          <SideTools>
            {sideIcons.map((n, i) => (
              <SideRow key={i}>
                <IconButton aria-label={`Tool ${i + 1}`}><Icon n={n} /></IconButton>
                {i === 11 && <Caret $w={14} />}
              </SideRow>
            ))}
          </SideTools>
          <FloatTools>
            <Icon n="sk1" />
            <Icon n="dim" />
          </FloatTools>
          <Panel>
            <Grip />
            <PanelTabs>
              <PanelTab $bg="none" aria-label="Feature tree"><Icon n="asm" /></PanelTab>
              <PanelTab $bg="#c5d0da" aria-label="Properties"><Icon n="props" /></PanelTab>
              <PanelTab $bg="#cecece" aria-label="Configurations"><Icon n="config" /></PanelTab>
              <PanelTab $bg="#cecece" aria-label="Dimensions"><Icon n="target" s={13} /></PanelTab>
              <PanelTab $bg="#cecece" aria-label="Display"><Icon n="ball" s={13} /></PanelTab>
              <More aria-label="More"><Glyph $s={7} viewBox="0 0 8 8"><path d="M2 0l4 4-4 4" fill="none" stroke="#333" strokeWidth="1.500" /></Glyph></More>
            </PanelTabs>
            <FilterBar><Icon n="filter" s={13} /><Caret $w={5} /></FilterBar>
            <Tree>
              <Node $root><Icon n="asm" s={13} />Assem1  (Default&lt;Display State-1&gt;)</Node>
              {nodes.map((d, i) => (
                <Node key={i} $warn={d.warn}>
                  <Twist $show={d.x} />
                  <Icon n={d.n} />
                  {d.warn && <Icon n="warn" s={12} />}
                  {d.t}
                </Node>
              ))}
            </Tree>
            <ScrollRow>
              <Glyph $s={6} viewBox="0 0 8 8"><path d="M6 0 2 4l4 4" fill="none" stroke="#333" strokeWidth="1.800" /></Glyph>
              <Track />
              <Glyph $s={6} viewBox="0 0 8 8"><path d="M2 0l4 4-4 4" fill="none" stroke="#333" strokeWidth="1.800" /></Glyph>
            </ScrollRow>
            <PanelHandle />
          </Panel>
          <Canvas>
            <Model viewBox="233 115 1133 593" role="img" aria-label="Robot arm">
              <g stroke="#1d2027" strokeWidth="1" strokeLinejoin="round">
                <path d="M794 493h18v26l-19 11v-30z" fill="#5f646e" />
                <path d="M780 493h32l-19 7z" fill="#a4abb5" />
                <path d="M759 497v30c3 5 26 6 34 3v-32z" fill="#79818d" />
                <ellipse cx="776" cy="496" rx="17" ry="4" fill="#9199a4" />
                <path d="M739 308l6 4 10 50 4 45 3 68 8 20c-9-2-14-8-15-19l-4-66-2-58z" fill="#7d838e" />
                <path d="M755 358l34-4 3 53-33 0z" fill="#727783" />
                <path d="M755 363c-2-6-11-57-11-64 2-18 31-19 34 1l11 52c2 27-30 28-34 11z" fill="#6e7480" />
                <path d="M759 407c-1-24 32-24 33 0l5 66c0 29-32 30-35 2z" fill="#6e7480" />
                <path d="M728 278l30-19 15 29 4 8c-6-15-29-13-33 7v8z" fill="#727783" />
                <path d="M700 242l12 6 16 30 17 34-6-4-14-30-7-6z" fill="#5e6470" />
                <path d="M712 248l30-18 16 29-30 19z" fill="#6c717d" />
                <path d="M702 234l-2 8 12 6-2-13z" fill="#737985" />
                <path d="M710 235c8 0 15-6 19-14l13 9-30 18z" fill="#7c828d" />
                <path d="M694 199l8 35c10 3 22-2 27-13l-26-25z" fill="#7c8491" />
                <path d="M694 199c0-5 8-6 9-2l-2 2z" fill="#3a3d45" />
                <path d="M747 347l4 1v7l-3 1zM751 400l4 6v8l-4-5z" fill="#363a43" />
                <path d="M755 468l5 1c2 6 2 14 3 20-6-5-8-12-8-21z" fill="#565b66" />
              </g>
              <path d="M698 202l13 28M770 503v26" stroke="#919aa7" strokeWidth="2" opacity=".4" />
              <path d="M789 333h7v4h-6zM844 215h7v2h-7zM602 625h6v2h-6z" fill="#fbf9b5" />
            </Model>
            <Triad viewBox="0 0 44 44">
              <path d="M10 32V16" stroke="#16852b" strokeWidth="3" />
              <path d="M6 19l4-9 4 9z" fill="#16852b" />
              <path d="M10 32h14" stroke="#1522a8" strokeWidth="3" />
              <path d="M23 28l7 4-7 4z" fill="#1522a8" />
              <path d="M10 32l7-5 5-3M18 28l4-1" stroke="#d9402c" strokeWidth="1.500" fill="none" />
              <text x="31" y="33" fontSize="8" fill="#333">z</text>
              <text x="7" y="6" fontSize="7" fill="#bbb">Y</text>
            </Triad>
            <Pointer viewBox="0 0 44 44">
              <circle cx="22" cy="22" r="20" fill="#f8e300" />
              <path d="M23 21v12l3-3 2 4 2-1-2-4h4z" fill="#fff" stroke="#5b4b2a" />
            </Pointer>
            <TaskPane>
              {["home", "lib", "folder", "palette", "ball", "list"].map((n) => <Icon key={n} n={n} s={13} />)}
            </TaskPane>
            <PaneHandle />
            <PlayBadge viewBox="0 0 64 62">
              <path d="M20 5l6 9M44 5l-6 9" stroke="#fff" strokeWidth="5" strokeLinecap="round" />
              <rect x="5" y="12" width="54" height="43" rx="10" fill="#fff" />
              <path d="M24 26c0-3 2-3 4-2l12 8c2 1 2 3 0 4l-12 7c-2 1-4 1-4-2z" fill="#fff" stroke="#a5a5a5" strokeWidth="1.500" />
            </PlayBadge>
          </Canvas>
        </Work>

        <ModelTabs>
          <TabFiller />
          <ModelTab $w={34} $on>模型</ModelTab>
          <ModelTab $w={41} $small>3D 视图</ModelTab>
          <ModelTab $w={69} $small>Motion Study 1</ModelTab>
          <ModelTab $w={60}>运动算例 1</ModelTab>
        </ModelTabs>
        <SketchBar>
          {["", "sk1", "line", "arc", "trim", "cross"].map((n, i) => <IconButton key={i} $w={19} aria-label={`Sketch ${i + 1}`}>{n && <Icon n={n} s={13} />}</IconButton>)}
          <Rule />
          {["hook", "off", "off", "corner", "cornerB"].map((n, i) => <IconButton key={i} $w={20} aria-label={`Edit ${i + 1}`}><Icon n={n} s={13} /></IconButton>)}
          <Rule />
          {["dim", "grid", "angle"].map((n) => <IconButton key={n} $w={22} aria-label={n}><Icon n={n} /></IconButton>)}
          <Rule />
        </SketchBar>
        <StatusBar>
          <span>SOLIDWORKS Premium 2020 SP3.0</span>
          <span>欠定义</span>
        </StatusBar>
        <Ime>
          <Glyph $s={18} viewBox="0 0 18 18"><rect x="1" y="2" width="15" height="14" rx="3" fill="#fff" stroke="#e2553a" /><path d="M14 4C8 2 3 5 6 8c3 1 8 1 6 4-2 2-6 2-9 0" fill="none" stroke="#e2553a" strokeWidth="3" /></Glyph>
          <b>英</b>
          <b>·,</b>
          {["smile", "mic", "kbd", "person", "shirt", "apps"].map((n) => <Icon key={n} n={n} s={12} />)}
        </Ime>
      </Frame>
    </Screen>
  );
}
